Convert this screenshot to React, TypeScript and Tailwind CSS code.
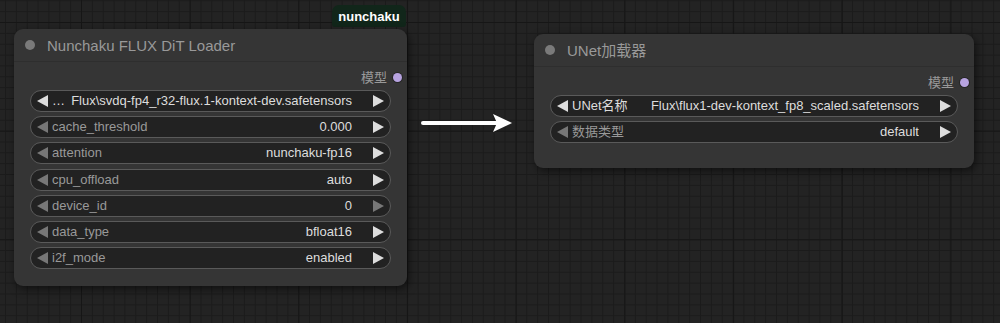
import React from "react";

const FONT = "font-['Liberation_Sans','Noto_Sans_CJK_SC',sans-serif]";

function LeftArrow({ on }: { on: boolean }) {
  return (
    <svg width="11" height="12" viewBox="0 0 11 12" className="shrink-0">
      <path d="M11 0 L0 6 L11 12 Z" fill={on ? "#dddddd" : "#777777"} />
    </svg>
  );
}

function RightArrow({ on }: { on: boolean }) {
  return (
    <svg width="11" height="12" viewBox="0 0 11 12" className="shrink-0">
      <path d="M0 0 L11 6 L0 12 Z" fill={on ? "#dddddd" : "#777777"} />
    </svg>
  );
}

interface WidgetProps {
  label: string;
  value: string;
  left?: boolean;
  right?: boolean;
  labelLight?: boolean;
}

function Widget({ label, value, left = false, right = true, labelLight = false }: WidgetProps) {
  return (
    <div className="h-[22px] shrink-0 rounded-full bg-[#222222] border border-[#5a5a5a] flex items-center pl-[6px] pr-[6px] text-[13px] leading-[16px]">
      <LeftArrow on={left} />
      <span
        className={
          labelLight
            ? "ml-[4px] text-[#dddddd] whitespace-nowrap"
            : "ml-[4px] text-[#999999] whitespace-nowrap"
        }
      >
        {label}
      </span>
      <span className="flex-1 text-right text-[#dddddd] whitespace-nowrap overflow-hidden">
        {value}
      </span>
      <span className="w-[21px] shrink-0" />
      <RightArrow on={right} />
    </div>
  );
}

function Node({
  title,
  className,
  children,
}: {
  title: string;
  className: string;
  children: React.ReactNode;
}) {
  return (
    <div
      className={
        "absolute rounded-[9px] bg-[#353535] shadow-[2px_3px_8px_rgba(0,0,0,0.55)] flex flex-col " +
        className
      }
    >
      <div className="h-[33px] shrink-0 flex items-center gap-[12px] pl-[11px] border-b border-[#2e2e2e]">
        <span className="w-[10px] h-[10px] shrink-0 rounded-full bg-[#7a7a7a]" />
        <span className="text-[15px] text-[#999999] leading-none">{title}</span>
      </div>
      <div className="h-[22px] mt-[4px] flex items-center justify-end gap-[6px] pr-[5px]">
        <span className="text-[13px] text-[#999999] leading-none">模型</span>
        <span className="block w-[9px] h-[9px] shrink-0 rounded-full bg-[#b7a3e0] ring-1 ring-[#262626]" />
      </div>
      <div className="flex flex-col gap-[4.2px] px-[16px] mt-[2px]">{children}</div>
    </div>
  );
}

export default function App() {
  return (
    <div
      className={
        "relative w-[1000px] h-[323px] overflow-hidden bg-[#232323] " +
        "[background-image:linear-gradient(to_right,#161616_1px,transparent_1px),linear-gradient(to_bottom,#161616_1px,transparent_1px),linear-gradient(to_right,#1b1b1b_1px,transparent_1px),linear-gradient(to_bottom,#1b1b1b_1px,transparent_1px)] " +
        "[background-size:108.7px_108.7px,108.7px_108.7px,10.87px_10.87px,10.87px_10.87px] " +
        "[background-position:81px_22px,81px_22px,81px_22px,81px_22px] " +
        FONT
      }
    >
      <div className="absolute left-[332px] top-[5px] w-[74px] h-[22px] rounded-t-[7px] rounded-b-[3px] bg-[#11261a] flex items-center justify-center text-[13px] font-bold text-white leading-none">
        nunchaku
      </div>

      <Node title="Nunchaku FLUX DiT Loader" className="left-[14px] top-[29px] w-[393px] h-[257px]">
        <Widget
          label="…"
          labelLight
          left
          value="Flux\svdq-fp4_r32-flux.1-kontext-dev.safetensors"
        />
        <Widget label="cache_threshold" value="0.000" />
        <Widget label="attention" value="nunchaku-fp16" />
        <Widget label="cpu_offload" value="auto" />
        <Widget label="device_id" value="0" right={false} />
        <Widget label="data_type" value="bfloat16" />
        <Widget label="i2f_mode" value="enabled" />
      </Node>

      <svg
        className="absolute left-[420px] top-[113px]"
        width="94"
        height="20"
        viewBox="0 0 94 20"
      >
        <line x1="3" y1="10" x2="80" y2="10" stroke="#ffffff" strokeWidth="4" strokeLinecap="round" />
        <path d="M73 1 L92 10 L73 19 L77 10 Z" fill="#ffffff" />
      </svg>

      <Node title="UNet加载器" className="left-[534px] top-[34px] w-[440px] h-[134px]">
        <Widget
          label="UNet名称"
          labelLight
          left
          value="Flux\flux1-dev-kontext_fp8_scaled.safetensors"
        />
        <Widget label="数据类型" value="default" />
      </Node>
    </div>
  );
}
